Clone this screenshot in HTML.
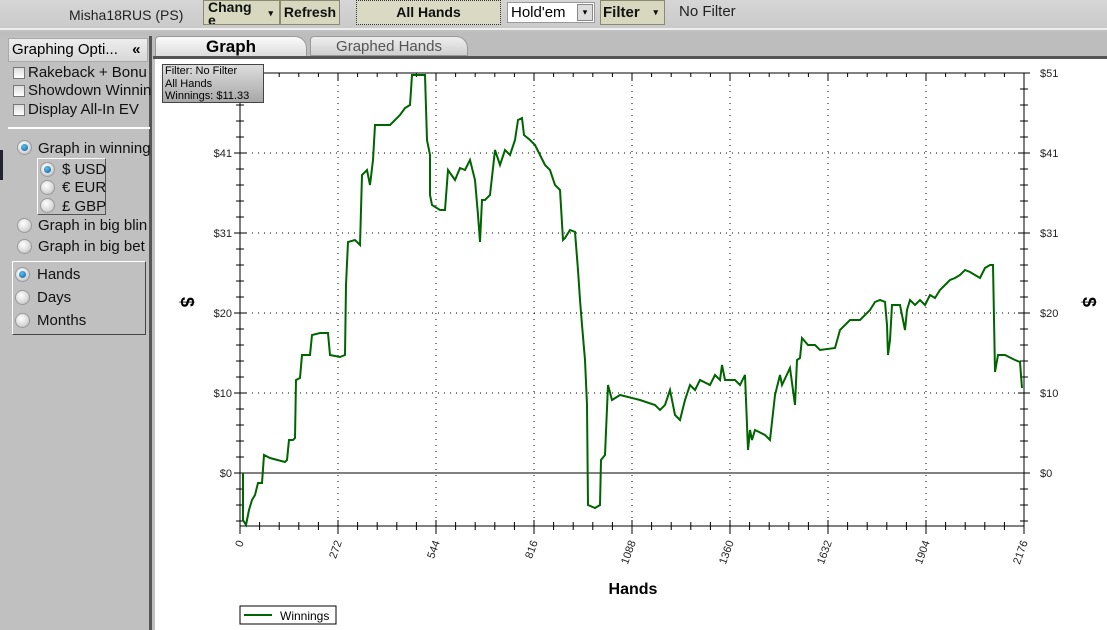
<!DOCTYPE html>
<html><head><meta charset="utf-8"><style>
*{margin:0;padding:0;box-sizing:border-box}
body{width:1107px;height:630px;overflow:hidden;background:#c0c0c0;font-family:"Liberation Sans",Arial,sans-serif;position:relative}
.top{position:absolute;left:0;top:0;width:1107px;height:30px;background:linear-gradient(#d6d6d6,#cacaca);border-bottom:2px solid #eee}
.a{position:absolute;font-size:14px;color:#222}
.btn{position:absolute;top:0;height:25px;background:#d8d8c0;border:1px solid #8a8a70;font-weight:bold;font-size:14px;color:#111;text-align:center;line-height:23px}
.left{position:absolute;left:0;top:36px;width:152px;height:594px;background:#c0c0c0;border-right:3px solid #555}
.rad{position:absolute;width:15px;height:15px;border-radius:50%;background:radial-gradient(circle at 40% 35%,#fff,#d8d8d8 60%,#aaa);border:1px solid #999}
.rad.on::after{content:"";position:absolute;left:3px;top:3px;width:7px;height:7px;border-radius:50%;background:radial-gradient(circle at 40% 35%,#5bc0f0,#0b5c9a)}
.cb{position:absolute;width:12px;height:12px;border:1px solid #777;background:linear-gradient(#ddd,#fff)}
.lt{position:absolute;font-size:15px;color:#111;white-space:nowrap}
</style></head><body>
<div class="top"></div>
<div class="a" style="left:69px;top:7px">Misha18RUS (PS)</div>
<div class="btn" style="left:203px;width:77px;line-height:13px;overflow:hidden;text-align:left;padding-left:4px">Chang<br>e<span style="position:absolute;right:6px;top:6px;font-size:9px">▾</span></div>
<div class="btn" style="left:280px;width:60px;font-size:14px">Refresh</div>
<div class="btn" style="left:356px;width:145px;border:1px dotted #333;background:#d9d9c4">All Hands</div>
<div style="position:absolute;left:507px;top:2px;width:88px;height:21px;background:#fff;border:1px solid #999;font-size:15px;padding-left:3px;line-height:19px">Hold'em<span style="position:absolute;right:1px;top:1px;width:16px;height:17px;background:#ddd;border:1px solid #888;font-size:9px;text-align:center;line-height:15px">▾</span></div>
<div class="btn" style="left:600px;width:65px;text-align:left;padding-left:2px;font-size:15px">Filter<span style="position:absolute;right:6px;top:0;font-size:9px">▾</span></div>
<div class="a" style="left:679px;top:3px;font-size:15px">No Filter</div>
<div style="position:absolute;left:0;top:32px;width:1107px;height:26px;background:#bdbdbd"></div>
<div style="position:absolute;left:155px;top:36px;width:152px;height:21px;background:linear-gradient(#fafafa,#dcdcdc);border:1px solid #999;border-bottom:none;border-radius:4px 12px 0 0;font-weight:bold;font-size:17px;text-align:center;line-height:19px">Graph</div>
<div style="position:absolute;left:310px;top:36px;width:158px;height:20px;background:linear-gradient(#eee,#d0d0d0);border:1px solid #999;border-radius:4px 12px 0 0;font-size:15px;color:#555;text-align:center;line-height:19px">Graphed Hands</div>
<div style="position:absolute;left:153px;top:56px;width:954px;height:3px;background:#555"></div>
<div class="left">
 <div style="position:absolute;left:8px;top:2px;width:140px;height:24px;background:linear-gradient(#eee,#d8d8d8);border:1px solid #aaa;font-size:15px;line-height:22px;padding-left:3px">Graphing Opti... <b style="margin-left:10px">«</b></div>
</div>
<div class="cb" style="left:13px;top:67px"></div><div class="lt" style="left:28px;top:64px">Rakeback + Bonu</div>
<div class="cb" style="left:13px;top:85px"></div><div class="lt" style="left:28px;top:82px">Showdown Winnin</div>
<div class="cb" style="left:13px;top:104px"></div><div class="lt" style="left:28px;top:101px">Display All-In EV</div>
<div style="position:absolute;left:8px;top:127px;width:142px;height:2px;background:#fff"></div>
<div class="rad on" style="left:17px;top:140px"></div><div class="lt" style="left:38px;top:140px">Graph in winning</div>
<div style="position:absolute;left:37px;top:158px;width:69px;height:57px;border:1px solid #fff;border-right-color:#555;border-bottom-color:#555"></div>
<div class="rad on" style="left:40px;top:162px"></div><div class="lt" style="left:62px;top:161px">$ USD</div>
<div class="rad" style="left:40px;top:180px"></div><div class="lt" style="left:62px;top:179px">€ EUR</div>
<div class="rad" style="left:40px;top:198px"></div><div class="lt" style="left:62px;top:198px">£ GBP</div>
<div class="rad" style="left:17px;top:218px"></div><div class="lt" style="left:38px;top:217px">Graph in big blin</div>
<div class="rad" style="left:17px;top:239px"></div><div class="lt" style="left:38px;top:238px">Graph in big bet</div>
<div style="position:absolute;left:12px;top:261px;width:134px;height:74px;border:1px solid #fff;border-right-color:#444;border-bottom-color:#444"></div>
<div class="rad on" style="left:15px;top:267px"></div><div class="lt" style="left:37px;top:266px">Hands</div>
<div class="rad" style="left:15px;top:290px"></div><div class="lt" style="left:37px;top:289px">Days</div>
<div class="rad" style="left:15px;top:313px"></div><div class="lt" style="left:37px;top:312px">Months</div>
<div style="position:absolute;left:0;top:150px;width:3px;height:30px;background:#223"></div>
<svg id="ch" style="position:absolute;left:0;top:0" width="1107" height="630" xmlns="http://www.w3.org/2000/svg">
<rect x="155" y="59" width="952" height="571" fill="#fff"/>
<g id="g" font-family="Liberation Sans,Arial,sans-serif" font-size="12" fill="#222"></g>
<polyline fill="none" stroke="#006400" stroke-width="2" points="243,473 243,520 246,525 249,510 252,500 255,495 258,483 262,483 264,455 270,458 285,462 287,460 289,440 293,440 295,438 296,380 300,378 302,355 310,355 312,335 320,333 328,333 330,355 340,357 345,355 346,285 348,242 355,240 360,245 362,175 367,170 370,185 373,160 375,125 390,125 395,120 400,115 405,108 410,105 412,75 425,75 427,140 430,155 430,195 432,205 440,210 445,210 448,170 455,180 460,168 465,170 470,160 475,180 478,215 480,242 482,200 485,200 490,195 495,150 500,165 505,150 510,155 515,140 518,120 522,118 524,135 530,140 535,145 540,155 545,165 550,170 555,185 560,190 563,240 565,238 570,230 575,232 578,270 580,300 582,325 585,360 587,405 588,505 595,508 600,505 601,460 605,455 608,385 612,400 620,395 640,400 655,405 660,410 665,405 670,390 675,415 680,420 685,400 690,385 695,390 700,380 710,385 715,375 720,380 722,365 725,380 735,380 740,385 745,375 748,450 750,430 752,440 755,430 765,435 770,440 775,395 780,375 782,385 790,368 795,405 797,360 800,358 802,338 808,345 815,345 820,350 835,348 840,330 845,325 850,320 860,320 870,310 875,302 880,300 885,302 887,325 888,355 890,340 892,305 900,305 905,330 907,310 910,300 915,305 920,300 925,305 930,295 935,298 940,290 945,285 950,280 955,278 960,275 965,270 970,272 975,275 980,278 985,268 990,265 993,265 995,372 998,355 1005,355 1015,360 1020,362 1022,388"/>
<rect x="240" y="606" width="96" height="18" fill="#fff" stroke="#000"/>
<line x1="244" y1="615" x2="272" y2="615" stroke="#006400" stroke-width="2"/>
<text x="280" y="620" font-family="Liberation Sans,Arial,sans-serif" font-size="12">Winnings</text>
<text x="633" y="594" text-anchor="middle" font-family="Liberation Sans,Arial,sans-serif" font-size="16" font-weight="bold">Hands</text>
<text x="181" y="302" text-anchor="middle" font-family="Liberation Sans,Arial,sans-serif" font-size="18" font-weight="bold" transform="rotate(90 181 302)">$</text>
<text x="1083" y="302" text-anchor="middle" font-family="Liberation Sans,Arial,sans-serif" font-size="18" font-weight="bold" transform="rotate(90 1083 302)">$</text>
</svg>
<div style="position:absolute;left:162px;top:64px;width:102px;height:39px;background:linear-gradient(#ddd,#a8a8a8);border:1px solid #444;font-size:11px;line-height:12.5px;padding-left:2px;font-family:'Liberation Sans',sans-serif">Filter: No Filter<br>All Hands<br>Winnings: $11.33</div>
<script>
var g=document.getElementById('g'),s='';
var L=240,R=1024,T=73,B=526;
s+='<line x1="'+L+'" y1="'+T+'" x2="'+L+'" y2="'+B+'" stroke="#000"/>';
s+='<line x1="'+R+'" y1="'+T+'" x2="'+R+'" y2="'+B+'" stroke="#000"/>';
s+='<line x1="'+L+'" y1="'+T+'" x2="'+R+'" y2="'+T+'" stroke="#000"/>';
s+='<line x1="'+L+'" y1="'+B+'" x2="'+R+'" y2="'+B+'" stroke="#000"/>';
s+='<line x1="'+L+'" y1="473" x2="'+R+'" y2="473" stroke="#000"/>';
var ys=[[73,'$51'],[153,'$41'],[233,'$31'],[313,'$20'],[393,'$10'],[473,'$0']];
ys.forEach(function(v){
 if(v[0]!=473&&v[0]!=73)s+='<line x1="'+L+'" y1="'+v[0]+'" x2="'+R+'" y2="'+v[0]+'" stroke="#000" stroke-dasharray="1,5"/>';
 s+='<text x="'+(L-8)+'" y="'+(v[0]+4)+'" text-anchor="end" font-size="11">'+v[1]+'</text>';
 s+='<text x="'+(R+16)+'" y="'+(v[0]+4)+'" font-size="11">'+v[1]+'</text>';
 s+='<line x1="'+(L-6)+'" y1="'+v[0]+'" x2="'+(L+6)+'" y2="'+v[0]+'" stroke="#000"/>';
 s+='<line x1="'+(R-6)+'" y1="'+v[0]+'" x2="'+(R+6)+'" y2="'+v[0]+'" stroke="#000"/>';
});
for(var y=T;y<=B;y+=16){s+='<line x1="'+(L-4)+'" y1="'+y+'" x2="'+(L+4)+'" y2="'+y+'" stroke="#000"/><line x1="'+(R-4)+'" y1="'+y+'" x2="'+(R+4)+'" y2="'+y+'" stroke="#000"/>';}
var lab=[0,272,544,816,1088,1360,1632,1904,2176];
for(var i=0;i<=40;i++){var x=L+i*(R-L)/40;var big=i%5==0;
 s+='<line x1="'+x+'" y1="'+(B-(big?6:4))+'" x2="'+x+'" y2="'+(B+(big?8:4))+'" stroke="#000"/>';
 s+='<line x1="'+x+'" y1="'+T+'" x2="'+x+'" y2="'+(T+(big?8:4))+'" stroke="#000"/>';
 if(big){var t=lab[i/5];
  if(i>0&&i<40)s+='<line x1="'+x+'" y1="'+T+'" x2="'+x+'" y2="'+B+'" stroke="#000" stroke-dasharray="1,5"/>';
  s+='<text x="'+(x+4)+'" y="'+(B+16)+'" text-anchor="end" font-size="11" transform="rotate(-70 '+(x+4)+' '+(B+16)+')">'+t+'</text>';}
}
g.innerHTML=s;
</script>
</body></html>
